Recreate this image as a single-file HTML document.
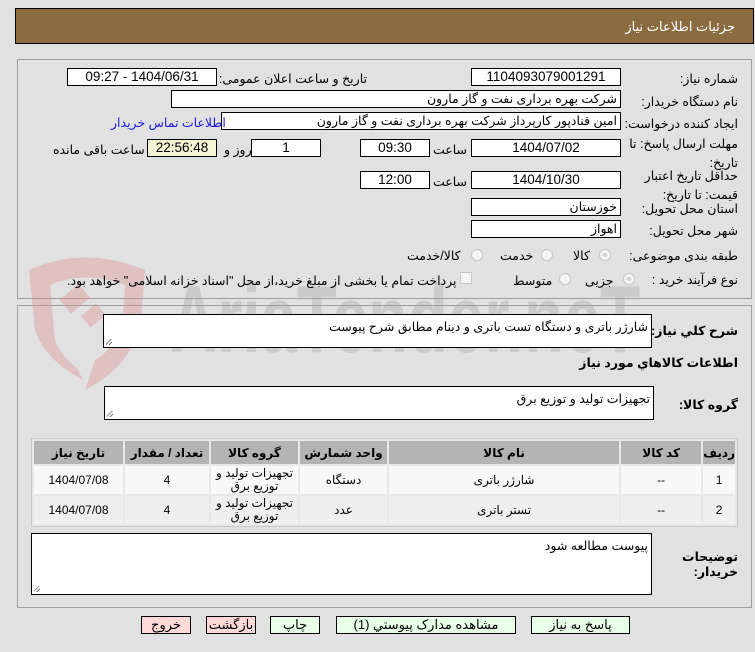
<!DOCTYPE html>
<html lang="fa" dir="rtl"><head><meta charset="utf-8">
<style>
*{box-sizing:border-box;margin:0;padding:0}
body{width:755px;height:652px;background:#e1e1e1;font-family:"Liberation Sans","DejaVu Sans",sans-serif;font-size:12.5px;color:#000;position:relative;overflow:hidden}
.a{position:absolute;white-space:nowrap}
.hdr{left:15px;top:8px;width:739px;height:36px;background:#8b6b40;border:1px solid #000}
.hdr span{position:absolute;right:18px;top:10px;color:#fff;font-size:13px}
.panel{position:absolute;border:1px solid #a0a0a0;background:#e1e1e1}
.box{position:absolute;background:#fff;border:1px solid #000;height:18px;font-size:13.5px;line-height:16px;text-align:center}
.boxr{text-align:right;padding-right:3px;font-size:12.5px}
.lbl{position:absolute;white-space:nowrap;font-size:12.5px;direction:rtl}
.rad{position:absolute;width:12px;height:12px;border-radius:50%;border:1px solid #c8c8c8;background:#f4f4f4}
.rad.on::after{content:"";position:absolute;left:3px;top:3px;width:4px;height:4px;border-radius:50%;background:#d0d0d0}
.ta{position:absolute;background:#fff;border:1px solid #000;text-align:right;padding:4px 3px;font-size:12.5px}
.ta::after{content:"";position:absolute;left:2px;bottom:2px;width:6px;height:6px;background:linear-gradient(135deg,transparent 40%,#777 40%,#777 50%,transparent 50%,transparent 70%,#777 70%,#777 80%,transparent 80%)}
table{position:absolute;left:31px;top:438px;width:707px;border-collapse:separate;border-spacing:2px;background:#e8e8e8;border:1px solid #c8c8c8}
th{background:#b4b4b4;height:23px;font-size:12px;font-weight:bold}
td{height:28px;text-align:center;font-size:12px;line-height:13px}
tr.r1 td{background:#f8f8f8}
tr.r2 td{background:#efefef}
.btn{position:absolute;top:616px;height:18px;border:1px solid #000;font-size:13px;text-align:center;line-height:16px}
.g{background:#e8ffe8}.p{background:#ffd8d8}
</style></head><body>
<div class="a hdr"><span>جزئیات اطلاعات نیاز</span></div>

<div class="panel" style="left:17px;top:59px;width:735px;height:240px"></div>
<div class="panel" style="left:17px;top:305px;width:735px;height:303px"></div>

<!-- watermark -->
<svg class="a" style="left:15px;top:250px;direction:ltr" width="640" height="140" viewBox="0 0 640 140">
<path d="M14 20 Q70 -5 130 20 L125 80 Q110 120 70 140 L80 110 Q105 95 108 65 L110 35 Q70 20 35 35 L40 90 Q45 105 62 118 L68 130 Q30 110 20 80 Z" fill="#d88" opacity="0.35"/>
<rect x="48" y="40" width="25" height="18" fill="#d88" opacity="0.35" transform="rotate(-40 60 50)"/>
<rect x="68" y="58" width="20" height="15" fill="#d88" opacity="0.35" transform="rotate(-40 78 65)"/>
<text x="155" y="102" text-anchor="start" direction="ltr" font-family="Liberation Sans" font-weight="bold" font-size="96" fill="#9a9a9a" opacity="0.3" textLength="470" lengthAdjust="spacingAndGlyphs">AriaTender.neT</text>
</svg>

<div class="lbl" style="right:17px;top:71px">شماره نیاز:</div>
<div class="box" style="left:471px;top:68px;width:150px">1104093079001291</div>
<div class="lbl" style="right:388px;top:71px">تاریخ و ساعت اعلان عمومی:</div>
<div class="box" style="left:67px;top:68px;width:150px">1404/06/31 - 09:27</div>

<div class="lbl" style="right:17px;top:94px">نام دستگاه خریدار:</div>
<div class="box boxr" style="left:171px;top:90px;width:450px">شرکت بهره برداری نفت و گاز مارون</div>

<div class="lbl" style="right:17px;top:116px">ایجاد کننده درخواست:</div>
<div class="box boxr" style="left:221px;top:112px;width:400px">امین قنادپور کارپرداز شرکت بهره برداری نفت و گاز مارون</div>
<div class="lbl" style="left:111px;top:115px;color:#1a1ae0">اطلاعات تماس خریدار</div>

<div class="lbl" style="right:17px;top:135px;line-height:19px;text-align:right">مهلت ارسال پاسخ: تا<br>تاریخ:</div>
<div class="box" style="left:471px;top:139px;width:150px">1404/07/02</div>
<div class="lbl" style="left:433px;top:142px">ساعت</div>
<div class="box" style="left:360px;top:139px;width:70px">09:30</div>
<div class="box" style="left:251px;top:139px;width:70px">1</div>
<div class="lbl" style="left:224px;top:142px">روز و</div>
<div class="box" style="left:147px;top:139px;width:70px;background:#f5f5d5">22:56:48</div>
<div class="lbl" style="left:53px;top:142px">ساعت باقی مانده</div>

<div class="lbl" style="right:17px;top:167px;line-height:19px;text-align:right">حداقل تاریخ اعتبار<br>قیمت: تا تاریخ:</div>
<div class="box" style="left:471px;top:171px;width:150px">1404/10/30</div>
<div class="lbl" style="left:433px;top:174px">ساعت</div>
<div class="box" style="left:360px;top:171px;width:70px">12:00</div>

<div class="lbl" style="right:17px;top:201px">استان محل تحویل:</div>
<div class="box boxr" style="left:471px;top:198px;width:150px">خوزستان</div>
<div class="lbl" style="right:17px;top:223px">شهر محل تحویل:</div>
<div class="box boxr" style="left:471px;top:220px;width:150px">اهواز</div>

<div class="lbl" style="right:17px;top:248px">طبقه بندی موضوعی:</div>
<div class="rad on" style="left:599px;top:249px"></div>
<div class="lbl" style="left:573px;top:248px">کالا</div>
<div class="rad" style="left:541px;top:249px"></div>
<div class="lbl" style="left:500px;top:248px">خدمت</div>
<div class="rad" style="left:471px;top:249px"></div>
<div class="lbl" style="left:407px;top:248px">کالا/خدمت</div>

<div class="lbl" style="right:17px;top:272px">نوع فرآیند خرید :</div>
<div class="rad on" style="left:623px;top:273px"></div>
<div class="lbl" style="left:585px;top:273px">جزیی</div>
<div class="rad" style="left:559px;top:273px"></div>
<div class="lbl" style="left:513px;top:273px">متوسط</div>
<div class="a" style="left:460px;top:272px;width:12px;height:12px;border:1px solid #c8c8c8;background:#f4f4f4"></div>
<div class="lbl" style="left:67px;top:273px">پرداخت تمام یا بخشی از مبلغ خرید،از محل "اسناد خزانه اسلامی" خواهد بود.</div>

<div class="lbl" style="right:17px;top:323px;font-weight:bold">شرح کلي نیاز:</div>
<div class="ta" style="left:103px;top:314px;width:549px;height:34px">شارژر باتری و دستگاه تست باتری و دینام مطابق شرح پیوست</div>

<div class="lbl" style="right:17px;top:355px;font-weight:bold">اطلاعات کالاهاي مورد نیاز</div>

<div class="lbl" style="right:17px;top:397px;font-weight:bold">گروه کالا:</div>
<div class="ta" style="left:104px;top:386px;width:550px;height:34px">تجهیزات تولید و توزیع برق</div>

<table>
<tr><th style="width:28px">ردیف</th><th style="width:80px">کد کالا</th><th>نام کالا</th><th style="width:87px">واحد شمارش</th><th style="width:87px">گروه کالا</th><th style="width:84px">تعداد / مقدار</th><th style="width:89px">تاریخ نیاز</th></tr>
<tr class="r1"><td>1</td><td>--</td><td>شارژر باتری</td><td>دستگاه</td><td>تجهیزات تولید و<br>توزیع برق</td><td>4</td><td>1404/07/08</td></tr>
<tr class="r2"><td>2</td><td>--</td><td>تستر باتری</td><td>عدد</td><td>تجهیزات تولید و<br>توزیع برق</td><td>4</td><td>1404/07/08</td></tr>
</table>

<div class="lbl" style="right:17px;top:550px;font-weight:bold;line-height:15px;text-align:right">توضیحات<br>خریدار:</div>
<div class="ta" style="left:31px;top:533px;width:621px;height:62px">پیوست مطالعه شود</div>

<div class="btn g" style="left:531px;width:99px">پاسخ به نیاز</div>
<div class="btn g" style="left:336px;width:180px">مشاهده مدارک پیوستي (1)</div>
<div class="btn g" style="left:270px;width:50px">چاپ</div>
<div class="btn p" style="left:206px;width:50px">بازگشت</div>
<div class="btn p" style="left:141px;width:50px">خروج</div>
</body></html>
